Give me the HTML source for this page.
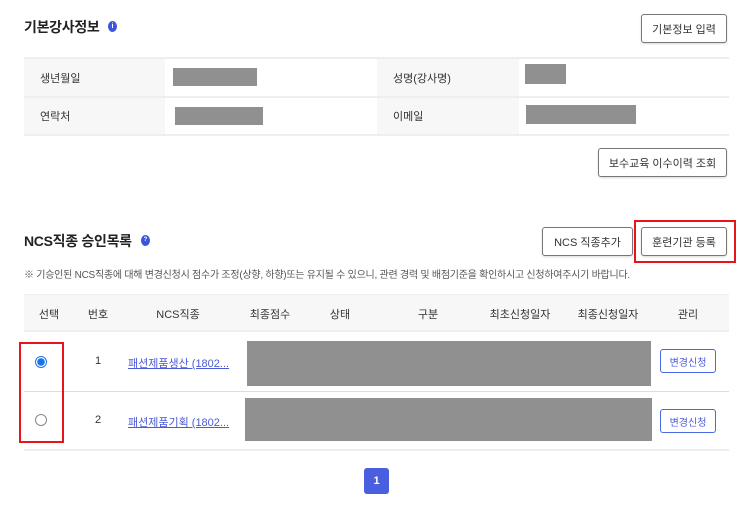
<!DOCTYPE html>
<html><head><meta charset="utf-8"><style>
*{margin:0;padding:0;box-sizing:border-box}
body{width:743px;height:506px;background:#fff;position:relative;font-family:"Liberation Sans","Noto Sans CJK KR",sans-serif;color:#222;overflow:hidden}
.a{position:absolute}
.btn{position:absolute;border:1px solid #777;border-radius:3px;background:#fff;font-size:11px;color:#333;display:flex;align-items:center;justify-content:center;box-shadow:0 1px 2px rgba(0,0,0,.15)}
.lab{position:absolute;background:#f7f7f7;font-size:11px;color:#333;display:flex;align-items:center;padding-left:16px}
.g{position:absolute;background:#909090}
.hl{position:absolute;height:2px;background:#eee}
.th{position:absolute;font-size:11px;color:#333;transform:translateX(-50%);top:306px}
.ic{position:absolute;width:9px;height:11px;border-radius:50%;background:#3f55d9;color:#fff;font-size:7px;font-weight:bold;text-align:center;line-height:11px}
.red{position:absolute;border:2px solid #e8141c}
.lnk{position:absolute;font-size:11px;color:#4b5bd6;text-decoration:underline}
.cb{position:absolute;border:1px solid #4b68e6;border-radius:3px;color:#4b5bd6;font-size:10px;display:flex;align-items:center;justify-content:center;background:#fff}
</style></head><body>
<div class="a" style="left:24px;top:17px;font-size:14px;font-weight:bold;letter-spacing:-0.3px">기본강사정보</div>
<div class="ic" style="left:108px;top:21px">i</div>
<div class="btn" style="left:641px;top:14px;width:86px;height:29px">기본정보 입력</div>

<div class="hl" style="left:24px;width:705px;top:57px"></div>
<div class="lab" style="left:24px;top:59px;width:141px;height:37px">생년월일</div>
<div class="lab" style="left:377px;top:59px;width:142px;height:37px">성명(강사명)</div>
<div class="hl" style="left:24px;width:705px;top:96px"></div>
<div class="lab" style="left:24px;top:98px;width:141px;height:36px">연락처</div>
<div class="lab" style="left:377px;top:98px;width:142px;height:36px">이메일</div>
<div class="hl" style="left:24px;width:705px;top:134px"></div>
<div class="g" style="left:173px;top:68px;width:84px;height:18px"></div>
<div class="g" style="left:525px;top:64px;width:41px;height:20px"></div>
<div class="g" style="left:175px;top:107px;width:88px;height:18px"></div>
<div class="g" style="left:526px;top:105px;width:110px;height:19px"></div>
<div class="btn" style="left:598px;top:148px;width:129px;height:29px">보수교육 이수이력 조회</div>

<div class="a" style="left:24px;top:231px;font-size:14px;font-weight:bold;letter-spacing:-0.3px">NCS직종 승인목록</div>
<div class="ic" style="left:141px;top:235px;font-size:6px">?</div>
<div class="btn" style="left:542px;top:227px;width:91px;height:29px">NCS 직종추가</div>
<div class="btn" style="left:641px;top:227px;width:86px;height:29px">훈련기관 등록</div>
<div class="red" style="left:634px;top:220px;width:102px;height:43px"></div>
<div class="a" style="left:24px;top:266px;font-size:10px;color:#555;letter-spacing:-0.25px;white-space:nowrap">※ 기승인된 NCS직종에 대해 변경신청시 점수가 조정(상향, 하향)또는 유지될 수 있으니, 관련 경력 및 배점기준을 확인하시고 신청하여주시기 바랍니다.</div>

<div class="a" style="left:24px;top:294px;width:705px;height:38px;background:#f7f7f7;border-top:1px solid #eee;border-bottom:2px solid #eee"></div>
<div class="th" style="left:49px">선택</div>
<div class="th" style="left:98px">번호</div>
<div class="th" style="left:178px">NCS직종</div>
<div class="th" style="left:270px">최종점수</div>
<div class="th" style="left:340px">상태</div>
<div class="th" style="left:428px">구분</div>
<div class="th" style="left:520px">최초신청일자</div>
<div class="th" style="left:608px">최종신청일자</div>
<div class="th" style="left:688px">관리</div>

<div class="a" style="left:35px;top:356px;width:12px;height:12px;border-radius:50%;border:1px solid #1a73e8;background:radial-gradient(circle,#1a73e8 3.5px,#fff 4px)"></div>
<div class="a" style="left:95px;top:355px;font-size:11px;color:#333">1</div>
<div class="lnk" style="left:128px;top:355px">패션제품생산 (1802...</div>
<div class="g" style="left:247px;top:341px;width:404px;height:45px"></div>
<div class="cb" style="left:660px;top:349px;width:56px;height:24px">변경신청</div>
<div class="hl" style="left:24px;width:705px;top:391px;height:1px;background:#ddd"></div>

<div class="a" style="left:35px;top:414px;width:12px;height:12px;border-radius:50%;border:1px solid #888;background:#fff"></div>
<div class="a" style="left:95px;top:414px;font-size:11px;color:#333">2</div>
<div class="lnk" style="left:128px;top:414px">패션제품기획 (1802...</div>
<div class="g" style="left:245px;top:398px;width:407px;height:43px"></div>
<div class="cb" style="left:660px;top:409px;width:56px;height:24px">변경신청</div>
<div class="hl" style="left:24px;width:705px;top:449px"></div>
<div class="red" style="left:19px;top:342px;width:45px;height:101px"></div>

<div class="a" style="left:364px;top:468px;width:25px;height:26px;background:#4a5fe0;border-radius:3px;color:#fff;font-size:11px;font-weight:bold;display:flex;align-items:center;justify-content:center">1</div>
</body></html>
